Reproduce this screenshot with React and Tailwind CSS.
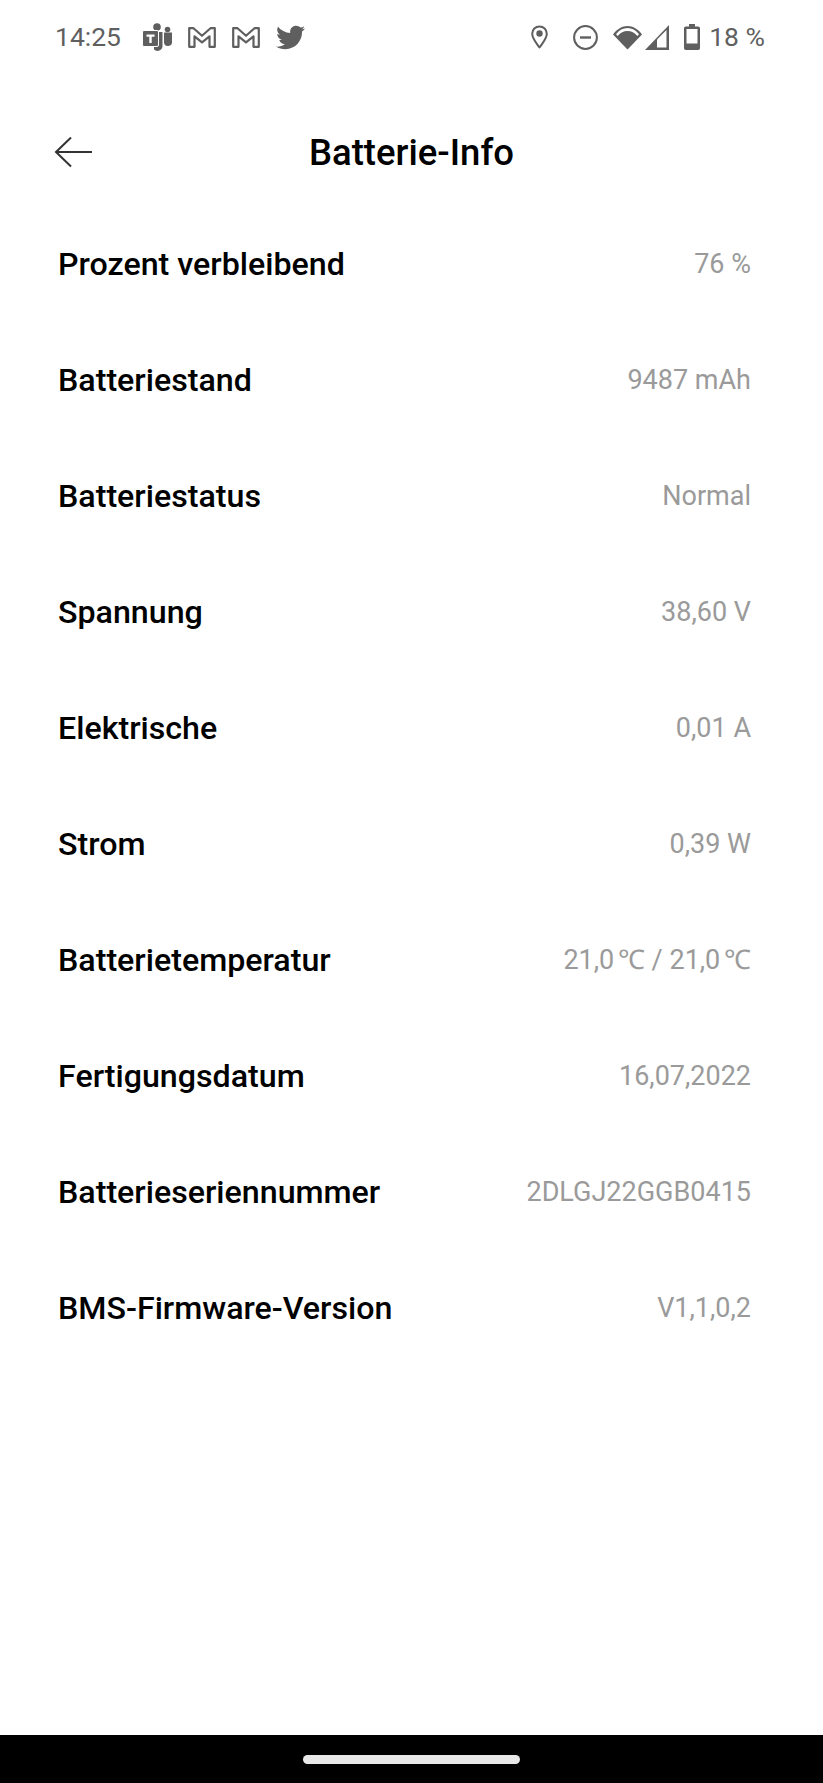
import React from 'react';
import { FaTwitter } from 'react-icons/fa';

const rows = [
  ['Prozent verbleibend', '76 %'],
  ['Batteriestand', '9487 mAh'],
  ['Batteriestatus', 'Normal'],
  ['Spannung', '38,60 V'],
  ['Elektrische', '0,01 A'],
  ['Strom', '0,39 W'],
  ['Batterietemperatur', <>21,0 <span className="-ml-[3px]">℃</span> / 21,0 <span className="-ml-[3px]">℃</span></>],
  ['Fertigungsdatum', '16,07,2022'],
  ['Batterieseriennummer', '2DLGJ22GGB0415'],
  ['BMS-Firmware-Version', 'V1,1,0,2'],
];

const TeamsIcon = () => (
  <svg width="30" height="28" viewBox="0 0 30 28" fill="#5f5f5f">
    <circle cx="15" cy="4" r="3.8" />
    <circle cx="25.5" cy="6.5" r="2.8" />
    <path d="M12 9h8.5v14a5 5 0 0 1-8.5 3.5z" />
    <path d="M22 9.5h8v9a4 4 0 0 1-8 1z" />
    <rect x="0.5" y="7.5" width="16" height="16" rx="1.5" stroke="#fff" strokeWidth="1" />
    <path d="M4.5 11.5h8v2.2H9.7v6.3H7.3v-6.3H4.5z" fill="#fff" />
  </svg>
);

const MailIcon = () => (
  <svg width="28" height="21" viewBox="0 0 28 21" fill="none" stroke="#5f5f5f" strokeWidth="2.2" strokeLinejoin="round">
    <path d="M1.2 1.2h4.3L14 8.8l8.5-7.6h4.3v18.6h-5.3V9.3L14 15.4 6.5 9.3v10.5H1.2z" />
  </svg>
);

const PinIcon = () => (
  <svg width="17" height="24" viewBox="0 0 17 24" fill="none">
    <path d="M8.5 22.5C4.5 17 1.2 13.3 1.2 8.7a7.3 7.3 0 0 1 14.6 0C15.8 13.3 12.5 17 8.5 22.5z" stroke="#5f5f5f" strokeWidth="2" strokeLinejoin="round" />
    <circle cx="8.5" cy="8.5" r="3.2" fill="#5f5f5f" />
  </svg>
);

const DndIcon = () => (
  <svg width="25" height="25" viewBox="0 0 25 25" fill="none" stroke="#5f5f5f" strokeWidth="2">
    <circle cx="12.5" cy="12.5" r="11.4" />
    <path d="M7 12.5h11" strokeWidth="2.4" />
  </svg>
);

const WifiIcon = () => (
  <svg width="29" height="25" viewBox="0 0 29 25">
    <path d="M14.5 24.5 0 9.5C4 4 9 1 14.5 1S25 4 29 9.5z" fill="#5f5f5f" />
    <path d="M3 9.3C6.3 5.2 10 3 14.5 3S22.7 5.2 26 9.3l-1.7 1.7C21.5 7.7 18.5 6.1 14.5 6.1S7.5 7.7 4.7 11z" fill="#fff" />
  </svg>
);

const SignalIcon = () => (
  <svg width="24" height="25" viewBox="0 0 24 25">
    <path d="M0 25 24 0v25z" fill="#5f5f5f" />
    <path d="M12 22.5V14.5L21.5 5v17.5z" fill="#fff" />
  </svg>
);

const BatteryIcon = () => (
  <svg width="16" height="26" viewBox="0 0 16 26">
    <path d="M5 0h6v2.5h3.2A1.8 1.8 0 0 1 16 4.3v19.9a1.8 1.8 0 0 1-1.8 1.8H1.8A1.8 1.8 0 0 1 0 24.2V4.3a1.8 1.8 0 0 1 1.8-1.8H5z" fill="#5f5f5f" />
    <rect x="2.5" y="5" width="11" height="14.5" fill="#fff" />
  </svg>
);

const BackArrow = () => (
  <svg width="40" height="32" viewBox="0 0 40 32" fill="none" stroke="#333" strokeWidth="2">
    <path d="M38 15H2M17 0.5 2 15l15 14.5" />
  </svg>
);

export default function App() {
  return (
    <div className="w-[823px] h-[1783px] flex flex-col bg-white font-['Roboto',sans-serif]">
      {/* Status bar */}
      <div className="h-[74px] flex items-center justify-between pl-[55px] pr-[58px] text-[#5f5f5f]">
        <div className="flex items-center">
          <span className="text-[26.5px] w-[87px]">14:25</span>
          <TeamsIcon />
          <div className="ml-[16px]"><MailIcon /></div>
          <div className="ml-[16px]"><MailIcon /></div>
          <FaTwitter className="text-[29px] ml-[16px]" />
        </div>
        <div className="flex items-center">
          <PinIcon />
          <div className="ml-[25px]"><DndIcon /></div>
          <div className="ml-[15px]"><WifiIcon /></div>
          <div className="ml-[3px]"><SignalIcon /></div>
          <div className="ml-[15px]"><BatteryIcon /></div>
          <span className="text-[26.5px] ml-[9px]">18 %</span>
        </div>
      </div>

      {/* Header */}
      <div className="relative h-[82px] mt-[38px] flex items-center justify-center">
        <div className="absolute left-[54px] top-[25px]"><BackArrow /></div>
        <h1 className="text-[36.5px] font-medium text-black">Batterie-Info</h1>
      </div>

      {/* Info rows */}
      <div className="mt-[12px] pl-[58px] pr-[72px] flex-1">
        {rows.map(([label, value]) => (
          <div key={label} className="h-[116px] flex items-center justify-between">
            <span className="text-[32.2px] font-medium text-black">{label}</span>
            <span className="text-[27px] text-[#9a9a9a]">{value}</span>
          </div>
        ))}
      </div>

      {/* Nav bar */}
      <div className="h-[48px] bg-black flex items-center justify-center">
        <div className="w-[217px] h-[9px] rounded-full bg-[#e8e8e8]" />
      </div>
    </div>
  );
}
